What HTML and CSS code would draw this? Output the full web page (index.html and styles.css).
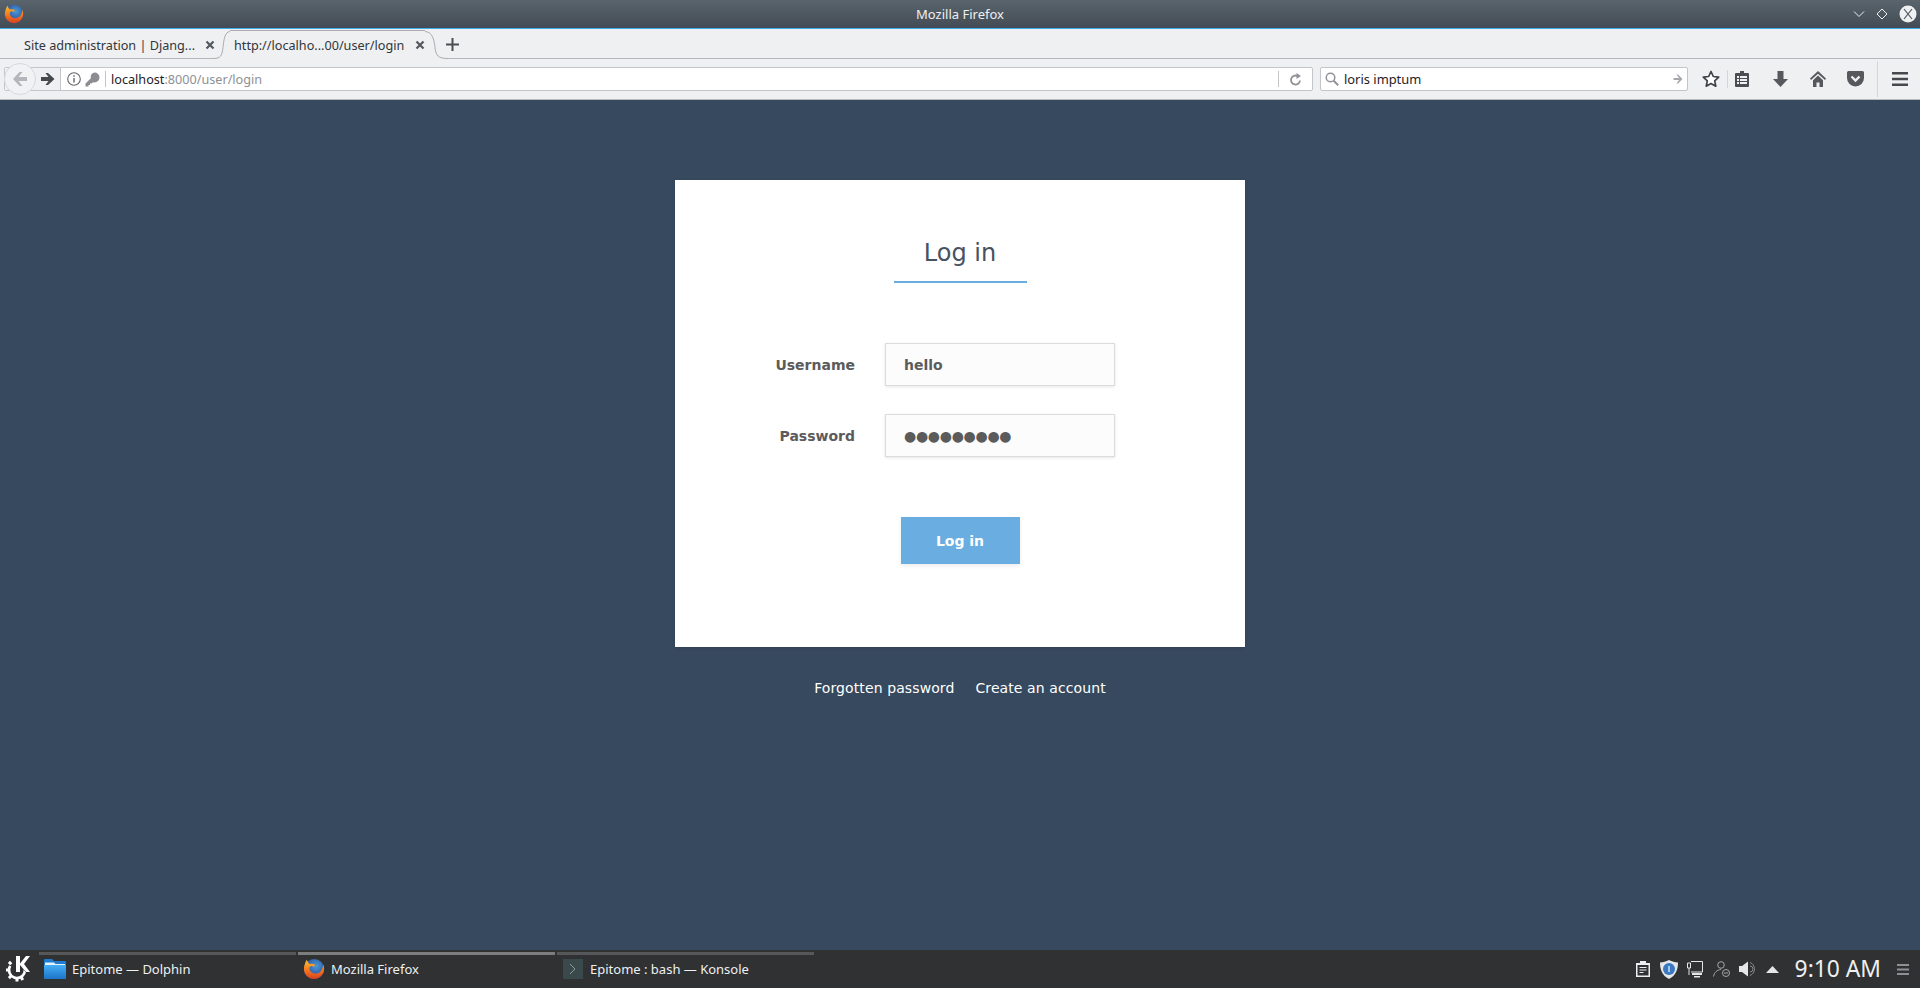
FILE: index.html
```html
<!DOCTYPE html>
<html lang="en">
<head>
    <meta charset="UTF-8">
    <meta name="viewport" content="width=device-width, initial-scale=1.0">
    <title>Log in</title>
    <link rel="stylesheet" href="styles.css">
</head>
<body>

<svg class="defs" width="0" height="0">
    <defs>
        <radialGradient id="ffGlobe" cx="0.6" cy="0.35" r="0.65">
            <stop offset="0" stop-color="#4a9ad8"/>
            <stop offset="1" stop-color="#27408f"/>
        </radialGradient>
        <linearGradient id="ffFox" x1="0.5" y1="0" x2="0.5" y2="1">
            <stop offset="0" stop-color="#fbc02d"/>
            <stop offset="0.5" stop-color="#f57c1f"/>
            <stop offset="1" stop-color="#d8401f"/>
        </linearGradient>
        <linearGradient id="folderBlue" x1="0" y1="0" x2="0" y2="1">
            <stop offset="0" stop-color="#45aef5"/>
            <stop offset="1" stop-color="#1c74c9"/>
        </linearGradient>
        <symbol id="firefox" viewBox="0 0 24 24">
            <circle cx="12" cy="12" r="11" fill="url(#ffGlobe)"/>
            <path d="M4 2C2 6 1 9 1 12c0 6 5 11 11 11s11-5 11-11c0-2-.4-3.500-1-5 0 5-3 10-8.500 10-4 0-6.500-3-6.500-6 0-1 1-2 2.500-2.500L12 10l1-3c-2-1-4-1-6-.5C6 5.500 5 4 4 2z" fill="url(#ffFox)"/>
        </symbol>
    </defs>
</svg>

<div class="screen">

    <header class="titlebar">
        <svg class="title-icon" width="20" height="20"><use href="#firefox"/></svg>
        <span class="title-text">Mozilla Firefox</span>
        <div class="win-buttons">
            <svg width="12" height="12" viewBox="0 0 12 12"><path d="M1 3.500l5 5 5-5" fill="none" stroke="#eef0f1"/></svg>
            <svg width="12" height="12" viewBox="0 0 12 12"><path d="M6 1l5 5-5 5-5-5z" fill="none" stroke="#eef0f1"/></svg>
            <svg width="18" height="18" viewBox="0 0 18 18"><circle cx="9" cy="9" r="8.500" fill="#eef0f1"/><path d="M5 4l8 10M13 4L5 14" stroke="#4b555e" stroke-width="1.200"/></svg>
        </div>
    </header>

    <div class="tabbar">
        <div class="tab">
            <span class="tab-label">Site administration | Djang...</span>
            <svg class="tab-close" width="10" height="10" viewBox="0 0 10 10"><path d="M1.500 1.500l7 7M8.500 1.500l-7 7" stroke="#53585e" stroke-width="2.200"/></svg>
        </div>
        <svg class="tab-edge tab-edge-left" width="17" height="29" viewBox="0 0 17 29"><path d="M0 28.500c8 0 9-3 10-11C11 8.500 12 2 17 1.500V29H0z" fill="#eff0f2"/><path d="M0 28.500c8 0 9-3 10-11C11 8.500 12 2 17 1.500" fill="none" stroke="#a9abaf"/></svg>
        <div class="tab tab-active">
            <span class="tab-label">http://localho...00/user/login</span>
            <svg class="tab-close" width="10" height="10" viewBox="0 0 10 10"><path d="M1.500 1.500l7 7M8.500 1.500l-7 7" stroke="#53585e" stroke-width="2.200"/></svg>
        </div>
        <svg class="tab-edge" width="23" height="29" viewBox="0 0 23 29"><path d="M23 28.500c-10 0-12-3-13-11C9 8.500 7 2 0 1.500V29h23z" fill="#eff0f2"/><path d="M23 28.500c-10 0-12-3-13-11C9 8.500 7 2 0 1.500" fill="none" stroke="#a9abaf"/></svg>
        <svg class="tab-new" width="13" height="13" viewBox="0 0 13 13"><path d="M6.500 0v13M0 6.500h13" stroke="#4a4d52" stroke-width="2"/></svg>
    </div>

    <nav class="navbar">
        <div class="back-btn">
            <svg width="16" height="14" viewBox="0 0 16 14"><path d="M7.500 0L1 7l6.500 7h3l-4-5H15V5H6.500l4-5z" fill="#b3b6ba"/></svg>
        </div>
        <div class="urlbar">
            <div class="forward-seg">
                <svg width="14" height="12" viewBox="0 0 14 12"><path d="M7 0l6.500 6L7 12H4.500l3-4H0V4h7.500l-3-4z" fill="#45484c"/></svg>
            </div>
            <div class="identity">
                <svg width="14" height="14" viewBox="0 0 14 14"><circle cx="7" cy="7" r="6.300" fill="none" stroke="#63666a" stroke-width="1.100"/><path d="M7 6v4.500M7 3.200v1.500" stroke="#63666a" stroke-width="1.400"/></svg>
                <svg width="15" height="15" viewBox="0 0 15 15"><path d="M9.500 .5a5 5 0 0 1 0 10c-.6 0-1.100-.1-1.600-.3L6.500 11.500H5V13H3.500v1.500H.5v-3l5.300-5.300A5 5 0 0 1 9.500 .5z" fill="#8b8d90"/></svg>
            </div>
            <span class="url-text">localhost<span class="url-dim">:8000/user/login</span></span>
            <div class="reload">
                <svg width="12" height="13" viewBox="0 0 12 13"><path d="M10 7.500A4.500 4.500 0 1 1 7.500 3" fill="none" stroke="#8f9297" stroke-width="1.800"/><path d="M6.500 0v6L11 3z" fill="#8f9297"/></svg>
            </div>
        </div>
        <div class="searchbar">
            <svg width="14" height="14" viewBox="0 0 14 14"><circle cx="5.500" cy="5.500" r="4.300" fill="none" stroke="#8f9297" stroke-width="1.500"/><path d="M8.700 8.700l4.500 4.500" stroke="#8f9297" stroke-width="2"/></svg>
            <span class="search-text">loris imptum</span>
            <svg width="10" height="10" viewBox="0 0 10 10"><path d="M5 .5L9.500 5 5 9.500H3.500L6 6H.5V4H6L3.500 .5z" fill="#a4a7ab"/></svg>
        </div>
        <div class="toolbar">
            <svg class="tool-star" width="18" height="18" viewBox="0 0 18 18"><path d="M9 1.500l2.300 5 5.400.6-4 3.700 1.100 5.400L9 13.500l-4.800 2.700 1.100-5.400-4-3.700 5.400-.6z" fill="#fff" stroke="#3f4246" stroke-width="1.700" stroke-linejoin="round"/></svg>
            <span class="tool-sep tool-sep-short"></span>
            <svg class="tool-clip" width="14" height="16" viewBox="0 0 14 16"><path d="M5 0h4v2h4a1 1 0 0 1 1 1v12a1 1 0 0 1-1 1H1a1 1 0 0 1-1-1V3a1 1 0 0 1 1-1h4z" fill="#4a4d52"/><path d="M2 5h2v2H2zM5 5h7v2H5zM2 8h2v2H2zM5 8h7v2H5zM2 11h2v2H2zM5 11h7v2H5z" fill="#eff0f2"/></svg>
            <svg class="tool-down" width="15" height="16" viewBox="0 0 15 16"><path d="M4.500 0h6v8H15l-7.500 8L0 8h4.500z" fill="#55585c"/></svg>
            <svg class="tool-home" width="16" height="16" viewBox="0 0 16 16"><path d="M8 0L0 7.500 1 9l7-6.300L15 9l1-1.500z" fill="#55585c"/><path d="M8 4.500L3 9.200V16h3.500v-4.500h3V16H13V9.200z" fill="#55585c"/></svg>
            <svg class="tool-pocket" width="17" height="16" viewBox="0 0 17 16"><path d="M1.500 0h14A1.500 1.500 0 0 1 17 1.500V7A8.500 8.500 0 0 1 0 7V1.500A1.500 1.500 0 0 1 1.500 0z" fill="#55585c"/><path d="M4.500 5.500l4 4 4-4" fill="none" stroke="#eff0f2" stroke-width="2.400"/></svg>
            <span class="tool-sep tool-sep-tall"></span>
            <svg class="tool-menu" width="16" height="14" viewBox="0 0 16 14"><path d="M0 0h16v2.600H0zM0 5.700h16v2.600H0zM0 11.400h16V14H0z" fill="#45484c"/></svg>
        </div>
    </nav>

    <main class="content">
        <div class="card">
            <h1 class="card-title">Log in</h1>
            <form class="login-form">
                <div class="field">
                    <label class="field-label">Username</label>
                    <div class="field-input">hello</div>
                </div>
                <div class="field">
                    <label class="field-label">Password</label>
                    <div class="field-input field-dots">●●●●●●●●●</div>
                </div>
                <div class="btn-row">
                    <button class="btn" type="button">Log in</button>
                </div>
            </form>
        </div>
        <div class="card-links">
            <a href="#">Forgotten password</a>
            <a href="#">Create an account</a>
        </div>
    </main>

    <footer class="taskbar">
        <svg class="kde-logo" width="24" height="26" viewBox="0 0 24 26">
            <circle cx="11" cy="14" r="8" fill="none" stroke="#fff" stroke-width="2.600" stroke-dasharray="32 18" transform="rotate(-20 11 14)"/>
            <path d="M15 20.900l1.800 3.100M11 22v3.500M5.300 19.700l-2.400 2.400M3 14H0M5.300 8.300L2.900 5.900" stroke="#fff" stroke-width="3"/>
            <path d="M10 0h4v7.500L20 0h4l-6 8 6 8h-4l-6-7v7h-4z" fill="#fff" stroke="#303132" stroke-width="1" paint-order="stroke"/>
        </svg>
        <div class="task">
            <svg class="task-icon" width="22" height="20" viewBox="0 0 22 20"><path d="M0 1a1 1 0 0 1 1-1h7l2 2h11a1 1 0 0 1 1 1v16a1 1 0 0 1-1 1H1a1 1 0 0 1-1-1z" fill="#1d7cd0"/><path d="M1 3.500h9l1.500 1.500H21v1H1z" fill="#e4f2fb"/><path d="M0 6h22v13a1 1 0 0 1-1 1H1a1 1 0 0 1-1-1z" fill="url(#folderBlue)"/></svg>
            <span>Epitome — Dolphin</span>
        </div>
        <div class="task task-active">
            <svg class="task-icon" width="22" height="22"><use href="#firefox"/></svg>
            <span>Mozilla Firefox</span>
        </div>
        <div class="task">
            <svg class="task-icon task-icon-term" width="20" height="20" viewBox="0 0 20 20"><path d="M0 0h20v20H0z" fill="#3a4a4c"/><path d="M7 5l5 5-5 5" fill="none" stroke="#8c9a9c"/></svg>
            <span>Epitome : bash — Konsole</span>
        </div>
        <div class="tray">
            <svg width="14" height="16" viewBox="0 0 14 16"><path d="M4 0h6v2h4v14H0V2h4z" fill="#eceff1"/><path d="M1.500 4h11v10.500h-11z" fill="#303132"/><path d="M3.500 6.500h7M3.500 9h7M3.500 11.500h4" stroke="#eceff1"/></svg>
            <svg class="tray-tight" width="18" height="19" viewBox="0 0 18 19"><path d="M9 0c3 1.500 6 2.300 9 2.500 0 7-2 13-9 16.500C2 15.500 0 9.500 0 2.500 3 2.300 6 1.500 9 0z" fill="#e4e6e8"/><circle cx="9" cy="9" r="6" fill="#3b78c2"/><path d="M9 6v6" stroke="#cfe0f2" stroke-width="1.500"/></svg>
            <svg width="16" height="17" viewBox="0 0 16 17"><path d="M4 .5h11.500v10.500H4" fill="none" stroke="#e4e6e8"/><path d="M.5 2h3v5h-3zM2 7v7" fill="none" stroke="#e4e6e8"/><path d="M5 12h10v2H5zM7 15h6v1.500H7z" fill="#e4e6e8"/></svg>
            <svg class="tray-tight" width="17" height="16" viewBox="0 0 17 16"><circle cx="8" cy="4" r="3.300" fill="none" stroke="#a5a8aa"/><path d="M.5 15.500C1.500 11 4 9 8 8.500" fill="none" stroke="#a5a8aa"/><circle cx="13" cy="12" r="3.500" fill="none" stroke="#a5a8aa"/><path d="M11 12h4" stroke="#a5a8aa"/></svg>
            <svg width="16" height="16" viewBox="0 0 16 16"><path d="M0 5h3l6-4.500v15L3 11H0z" fill="#e4e6e8"/><path d="M11 1.500a7 7 0 0 1 0 13M11 5a3 3 0 0 1 0 6" fill="none" stroke="#85888a"/></svg>
            <svg class="tray-arrow" width="13" height="7" viewBox="0 0 13 7"><path d="M6.500 0L13 7H0z" fill="#e4e6e8"/></svg>
            <span class="clock">9:10 AM</span>
            <svg class="tray-menu" width="12" height="11" viewBox="0 0 12 11"><path d="M0 0h12v2H0zM0 4.500h12v2H0zM0 9h12v2H0z" fill="#8e9193"/></svg>
        </div>
    </footer>

</div>

</body>
</html>
```

FILE: styles.css
```css
* {
    box-sizing: border-box;
}
html, body {
    margin: 0;
    height: 100%;
    overflow: hidden;
}
body {
    font-family: "Noto Sans", sans-serif;
    font-size: 13px;
    color: #31363b;
}
.defs {
    display: block;
    height: 0;
}
.screen {
    display: flex;
    flex-direction: column;
    height: 988px;
}

/* window title */
.titlebar {
    display: flex;
    align-items: center;
    justify-content: space-between;
    height: 29px;
    padding: 0 3px 0 4px;
    background: linear-gradient(#59646d, #434c54);
    border-bottom: 1px solid #3daee9;
    color: #eef0f1;
}
.title-icon {
    flex: none;
}
.title-text {
    position: absolute;
    left: 0;
    right: 0;
    text-align: center;
    line-height: 28px;
}
.win-buttons {
    display: flex;
    align-items: center;
    gap: 11px;
}

/* tabs */
.tabbar {
    display: flex;
    align-items: flex-end;
    height: 30px;
    padding-left: 24px;
    background: linear-gradient(#b4b6ba, #b4b6ba) bottom / 100% 1px no-repeat #eff0f2;
}
.tab {
    display: flex;
    align-items: center;
    justify-content: space-between;
    width: 191px;
    height: 29px;
}
.tab-active {
    width: 195px;
    padding-left: 4px;
    border-top: 1px solid #a9abaf;
    background: #eff0f2;
}
.tab-label {
    font-size: 12.65px;
    white-space: nowrap;
    color: #31363b;
}
.tab-close {
    flex: none;
}
.tab-edge {
    flex: none;
    display: block;
}
.tab-edge-left {
    margin-left: -2px;
}
.tab-new {
    flex: none;
    margin: 0 0 8px -2px;
}

/* nav */
.navbar {
    display: flex;
    align-items: center;
    height: 41px;
    padding-left: 4px;
    background: #eff0f2;
    border-bottom: 1px solid #b9bbbf;
}
.back-btn {
    display: flex;
    align-items: center;
    justify-content: center;
    width: 32px;
    height: 32px;
    margin-right: -32px;
    border: 1px solid #d8d9dc;
    border-radius: 50%;
    background: #f1f2f4;
    position: relative;
    z-index: 1;
}
.urlbar {
    display: flex;
    align-items: center;
    width: 1309px;
    height: 24px;
    background: #fff;
    border: 1px solid #c3c5c9;
    border-radius: 2px;
}
.forward-seg {
    display: flex;
    align-items: center;
    justify-content: flex-end;
    width: 56px;
    height: 22px;
    padding-right: 5px;
    background: #eff0f2;
    border-right: 1px solid #c3c5c9;
}
.identity {
    display: flex;
    align-items: center;
    gap: 4px;
    height: 16px;
    padding: 0 5px 0 6px;
    margin-right: 5px;
    border-right: 1px solid #c3c5c9;
}
.url-text {
    flex: 1;
    font-size: 12.65px;
    color: #1f2226;
}
.url-dim {
    color: #8d9095;
}
.reload {
    display: flex;
    align-items: center;
    justify-content: center;
    width: 34px;
    height: 16px;
    border-left: 1px solid #c3c5c9;
}
.searchbar {
    display: flex;
    align-items: center;
    width: 368px;
    height: 24px;
    margin-left: 7px;
    padding: 0 4px;
    background: #fff;
    border: 1px solid #c3c5c9;
    border-radius: 2px;
}
.search-text {
    flex: 1;
    margin-left: 5px;
    font-size: 12.9px;
    color: #1f2226;
}
.toolbar {
    display: flex;
    align-items: center;
    flex: 1;
    height: 100%;
}
.tool-star {
    margin-left: 14px;
}
.tool-sep {
    width: 1px;
    background: #d3d5d8;
}
.tool-sep-short {
    height: 18px;
    margin-left: 7px;
}
.tool-sep-tall {
    height: 36px;
    margin-left: 13px;
}
.tool-clip {
    margin-left: 7px;
}
.tool-down {
    margin-left: 24px;
}
.tool-home {
    margin-left: 22px;
}
.tool-pocket {
    margin-left: 21px;
}
.tool-menu {
    margin-left: 14px;
}

/* page */
.content {
    flex: 1;
    display: flex;
    flex-direction: column;
    align-items: center;
    padding-top: 80px;
    background: #37495e;
    font-family: "DejaVu Sans", sans-serif;
}
.card {
    width: 570px;
    height: 467px;
    padding-top: 59px;
    background: #fff;
    box-shadow: 0 1px 3px rgba(0, 0, 0, 0.1);
}
.card-title {
    width: 133px;
    height: 44px;
    margin: 0 auto 60px;
    border-bottom: 2px solid #6aade1;
    font-size: 24px;
    font-weight: 400;
    line-height: 29px;
    text-align: center;
    color: #46525f;
}
.login-form {
    display: flex;
    flex-direction: column;
    gap: 28px;
}
.field {
    display: flex;
    align-items: center;
    height: 43px;
}
.field-label {
    width: 180px;
    margin-right: 30px;
    text-align: right;
    font-size: 14px;
    font-weight: 700;
    color: #5b5b5b;
}
.field-input {
    width: 230px;
    height: 43px;
    padding: 0 18px;
    border: 1px solid #dcdcdc;
    background: #fcfcfc;
    box-shadow: 0 1px 3px rgba(0, 0, 0, 0.1);
    font-size: 14px;
    font-weight: 700;
    line-height: 42px;
    color: #5b5b5b;
}
.field-dots {
    letter-spacing: -0.3px;
}
.btn-row {
    display: flex;
    justify-content: center;
    margin-top: 32px;
}
.btn {
    width: 119px;
    height: 47px;
    padding: 0;
    border: none;
    background: #6aade1;
    box-shadow: 0 2px 4px rgba(0, 0, 0, 0.08);
    font-family: "DejaVu Sans", sans-serif;
    font-size: 14px;
    font-weight: 700;
    color: #fff;
}
.card-links {
    display: flex;
    gap: 21px;
    margin-top: 33px;
}
.card-links a {
    font-size: 14px;
    line-height: 17px;
    letter-spacing: 0.1px;
    color: #fff;
    text-decoration: none;
}

/* panel */
.taskbar {
    display: flex;
    align-items: stretch;
    height: 38px;
    padding-left: 6px;
    background: #303132;
    color: #eef0f1;
}
.kde-logo {
    flex: none;
    align-self: center;
    margin-right: 9px;
}
.task {
    display: flex;
    align-items: center;
    gap: 6px;
    width: 257px;
    margin-right: 2px;
    padding-left: 5px;
    background: linear-gradient(#565759, #565759) 0 2px / 100% 3px no-repeat;
}
.task-active {
    background-image: linear-gradient(#7c7d7f, #7c7d7f);
}
.task-icon {
    flex: none;
}
.task-icon-term {
    margin: 0 1px;
}
.tray {
    display: flex;
    align-items: center;
    flex: 1;
    justify-content: flex-end;
    gap: 10px;
    padding-right: 11px;
}
.tray-tight {
    margin-right: -1px;
}
.tray-arrow {
    margin-left: 1px;
}
.clock {
    margin: 0 6px;
    font-size: 22.8px;
    line-height: 30px;
    white-space: nowrap;
}
```
